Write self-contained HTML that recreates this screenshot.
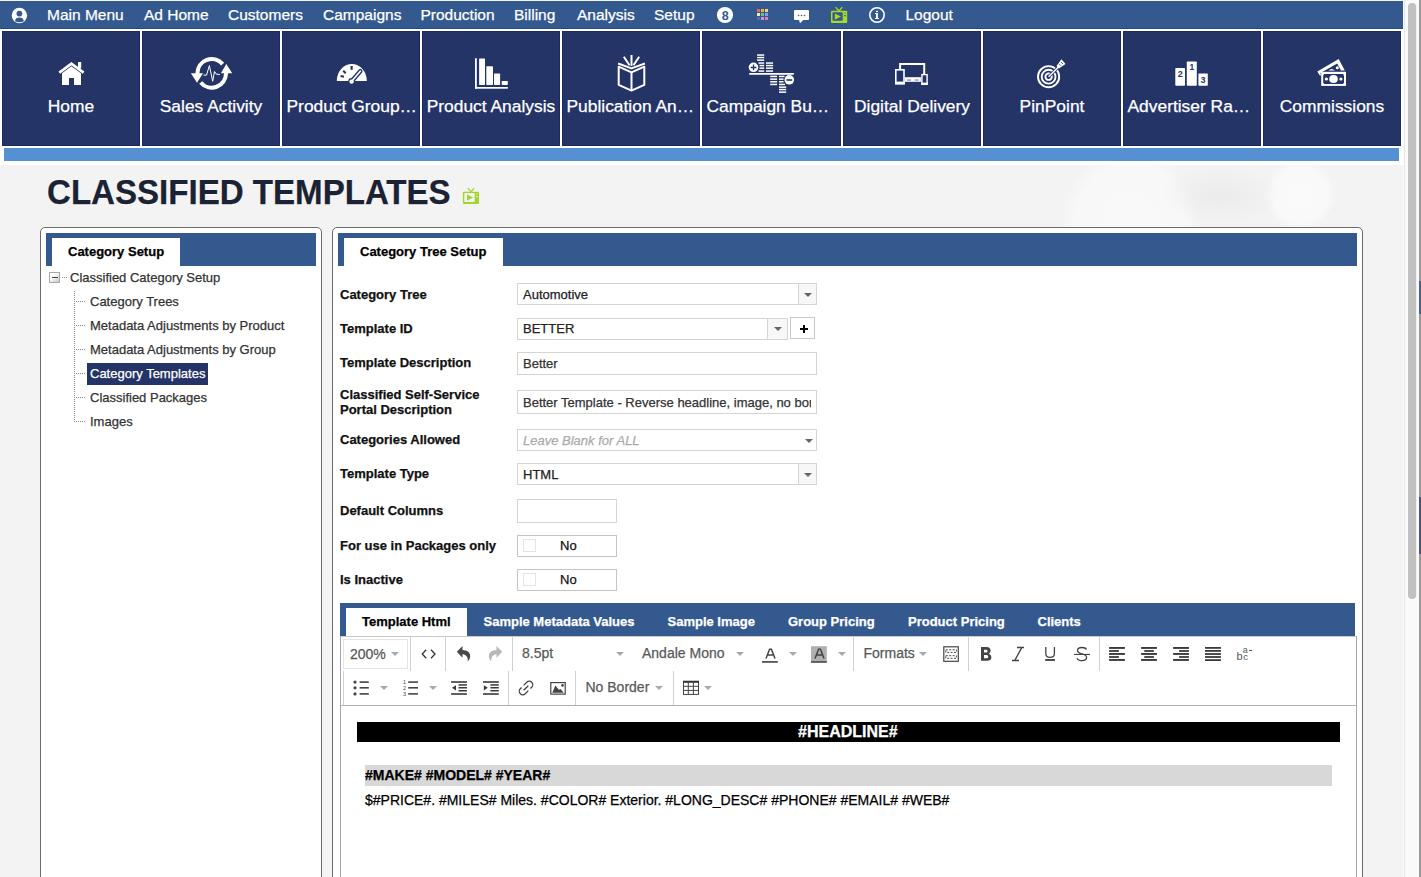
<!DOCTYPE html>
<html><head><meta charset="utf-8">
<style>
*{box-sizing:border-box;margin:0;padding:0}
html,body{width:1421px;height:877px;overflow:hidden;font-family:"Liberation Sans",sans-serif;}
body{background:#f3f3f3;position:relative;}
.a{position:absolute;}
.t,.lbl,.tree,.lab,.inp span{-webkit-text-stroke:0.25px currentColor;}
.t{position:absolute;white-space:nowrap;line-height:1;}
#topbar{left:0;top:1px;width:1403px;height:28px;background:#33598e;border-bottom:1px solid #274a7c;}
#topbar .t{color:#fff;font-size:15.5px;top:5.5px;}
.tile{position:absolute;top:31px;width:138px;height:115px;background:#243466;border:1px solid #1c2a58;}
.tile .lbl{position:absolute;left:0px;right:0px;top:64px;text-align:center;color:#fff;font-size:17.4px;line-height:20px;white-space:nowrap;}
.tile svg{position:absolute;left:0;top:0;}
#lbar{left:4px;top:148px;width:1395px;height:13px;background:#5591d2;}
#whiteband{left:0;top:29px;width:1403px;height:136px;background:#fff;}
.panel{position:absolute;top:227px;height:700px;background:#fff;border:1px solid #6b6b6b;border-radius:5px;}
.tabbar{position:absolute;height:33px;background:#33598e;}
.tab{position:absolute;background:#fff;height:28px;font-weight:bold;font-size:13px;color:#000;}
.lab{position:absolute;font-weight:bold;font-size:13px;color:#111;white-space:nowrap;line-height:15px;}
.inp{position:absolute;background:#fff;border:1px solid #d4d4d4;font-size:13px;color:#222;white-space:nowrap;overflow:hidden;}
.inp span{position:absolute;left:5px;top:4px;line-height:14px;}
.ddb{position:absolute;right:0;top:0;bottom:0;width:18px;border-left:1px solid #d4d4d4;background:#f7f7f7;}
.caret{position:absolute;width:0;height:0;border-left:4px solid transparent;border-right:4px solid transparent;border-top:4px solid #666;}
.tree{position:absolute;font-size:13px;color:#333;white-space:nowrap;line-height:15px;}
.tb .t{color:#595959;font-size:14px;}
.sep{position:absolute;width:1px;background:#d0d0d0;}
.gc{position:absolute;width:0;height:0;border-left:4px solid transparent;border-right:4px solid transparent;border-top:4px solid #a5aab0;}
</style></head><body>
<div class="a" style="left:1060px;top:150px;width:140px;height:140px;border-radius:50%;background:radial-gradient(circle,#f9f9f9 0%,#f8f8f8 55%,rgba(248,248,248,0) 70%);"></div>
<div class="a" style="left:1265px;top:160px;width:70px;height:70px;border-radius:50%;background:radial-gradient(circle,#fafafa 0%,#f9f9f9 55%,rgba(249,249,249,0) 72%);"></div>
<div class="a" style="left:1160px;top:165px;width:120px;height:60px;border-radius:50%;background:radial-gradient(ellipse,#ebebeb 0%,rgba(235,235,235,0) 70%);"></div>
<div class="a" id="whiteband"></div>
<div class="a" id="topbar">
  <span class="t" style="left:47px">Main Menu</span>
  <span class="t" style="left:144px">Ad Home</span>
  <span class="t" style="left:228px">Customers</span>
  <span class="t" style="left:323px">Campaigns</span>
  <span class="t" style="left:420.5px">Production</span>
  <span class="t" style="left:514px">Billing</span>
  <span class="t" style="left:577px">Analysis</span>
  <span class="t" style="left:654px">Setup</span>
  <span class="t" style="left:905.5px">Logout</span>
</div>
<div class="tile" style="left:2px;width:138px"><div class="lbl">Home</div></div>
<div class="tile" style="left:142px;width:138px"><div class="lbl">Sales Activity</div></div>
<div class="tile" style="left:282px;width:138px"><div class="lbl" style="text-align:left;left:3.5px;">Product Group…</div></div>
<div class="tile" style="left:422px;width:138px"><div class="lbl">Product Analysis</div></div>
<div class="tile" style="left:562px;width:138px"><div class="lbl" style="text-align:left;left:3.5px;">Publication An…</div></div>
<div class="tile" style="left:702px;width:139px"><div class="lbl" style="text-align:left;left:3.5px;">Campaign Bu…</div></div>
<div class="tile" style="left:843px;width:138px"><div class="lbl">Digital Delivery</div></div>
<div class="tile" style="left:983px;width:138px"><div class="lbl">PinPoint</div></div>
<div class="tile" style="left:1123px;width:138px"><div class="lbl" style="text-align:left;left:3.5px;">Advertiser Ra…</div></div>
<div class="tile" style="left:1263px;width:138px"><div class="lbl">Commissions</div></div>
<div class="a" id="lbar"></div>

<div class="t" style="left:47px;top:174px;font-size:35px;font-weight:bold;color:#1a2233;text-shadow:0 1px 1px #fff;transform-origin:0 0;transform:scaleX(0.945);">CLASSIFIED TEMPLATES</div>

<!-- left panel -->
<div class="panel" style="left:40px;width:282px;">
  <div class="tabbar" style="left:5px;top:5px;width:270px;"></div>
  <div class="tab" style="left:11px;top:10px;width:128px;"><span class="t" style="left:16px;top:7px">Category Setup</span></div>
</div>

<!-- right panel -->
<div class="panel" style="left:332px;width:1031px;">
  <div class="tabbar" style="left:5px;top:5px;width:1019px;"></div>
  <div class="tab" style="left:11px;top:10px;width:159px;"><span class="t" style="left:16px;top:7px">Category Tree Setup</span></div>
</div>


<!-- tree -->
<div class="a" style="left:49px;top:272px;width:11px;height:11px;border:1px solid #a8a8a8;background:linear-gradient(135deg,#fff,#fff 30%,#c8c8c8);"></div>
<div class="a" style="left:52px;top:277px;width:6px;height:1px;background:#444;"></div>
<div class="a" style="left:62px;top:277px;width:5px;height:1px;background:repeating-linear-gradient(90deg,#888 0 1px,transparent 1px 2px);"></div>
<div class="tree" style="left:70px;top:270px;">Classified Category Setup</div>
<div class="a" style="left:74px;top:291px;width:1px;height:131px;background:repeating-linear-gradient(#888 0 1px,transparent 1px 2px);"></div>
<div class="a" style="left:75px;top:301px;width:10px;height:1px;background:repeating-linear-gradient(90deg,transparent 0 1px,#888 1px 2px);"></div>
<div class="a" style="left:75px;top:325px;width:10px;height:1px;background:repeating-linear-gradient(90deg,transparent 0 1px,#888 1px 2px);"></div>
<div class="a" style="left:75px;top:349px;width:10px;height:1px;background:repeating-linear-gradient(90deg,transparent 0 1px,#888 1px 2px);"></div>
<div class="a" style="left:75px;top:373px;width:10px;height:1px;background:repeating-linear-gradient(90deg,transparent 0 1px,#888 1px 2px);"></div>
<div class="a" style="left:75px;top:397px;width:10px;height:1px;background:repeating-linear-gradient(90deg,transparent 0 1px,#888 1px 2px);"></div>
<div class="a" style="left:75px;top:421px;width:10px;height:1px;background:repeating-linear-gradient(90deg,transparent 0 1px,#888 1px 2px);"></div>
<div class="tree" style="left:90px;top:294px;">Category Trees</div>
<div class="tree" style="left:90px;top:318px;">Metadata Adjustments by Product</div>
<div class="tree" style="left:90px;top:342px;">Metadata Adjustments by Group</div>
<div class="a" style="left:87px;top:363px;width:121px;height:22px;background:#243466;"></div>
<div class="tree" style="left:90px;top:366px;color:#fff;">Category Templates</div>
<div class="tree" style="left:90px;top:390px;">Classified Packages</div>
<div class="tree" style="left:90px;top:414px;">Images</div>

<!-- form -->
<div class="lab" style="left:340px;top:287px;">Category Tree</div>
<div class="lab" style="left:340px;top:321px;">Template ID</div>
<div class="lab" style="left:340px;top:355px;">Template Description</div>
<div class="lab" style="left:340px;top:387px;">Classified Self-Service<br>Portal Description</div>
<div class="lab" style="left:340px;top:432px;">Categories Allowed</div>
<div class="lab" style="left:340px;top:466px;">Template Type</div>
<div class="lab" style="left:340px;top:503px;">Default Columns</div>
<div class="lab" style="left:340px;top:538px;">For use in Packages only</div>
<div class="lab" style="left:340px;top:572px;">Is Inactive</div>

<div class="inp" style="left:517px;top:283px;width:300px;height:22px;"><span>Automotive</span><div class="ddb"><div class="caret" style="left:5px;top:9px;"></div></div></div>
<div class="inp" style="left:517px;top:318px;width:271px;height:22px;"><span style="top:3px">BETTER</span><div class="ddb" style="width:20px;"><div class="caret" style="left:6px;top:8px;"></div></div></div>
<div class="inp" style="left:790px;top:317px;width:25px;height:22px;border-color:#c8c8c8;"><div class="a" style="left:9px;top:10px;width:8px;height:2px;background:#000;"></div><div class="a" style="left:12px;top:7px;width:2px;height:8px;background:#000;"></div></div>
<div class="inp" style="left:517px;top:352px;width:300px;height:23px;"><span style="color:#333">Better</span></div>
<div class="inp" style="left:517px;top:390px;width:300px;height:24px;"><span style="color:#333;top:5px;width:288px;overflow:hidden;">Better Template - Reverse headline, image, no bor</span></div>
<div class="inp" style="left:517px;top:429px;width:300px;height:22px;"><span style="color:#aaa;font-style:italic">Leave Blank for ALL</span><div class="caret" style="left:287px;top:9px;"></div></div>
<div class="inp" style="left:517px;top:463px;width:300px;height:22px;"><span>HTML</span><div class="ddb"><div class="caret" style="left:5px;top:9px;"></div></div></div>
<div class="inp" style="left:517px;top:499px;width:100px;height:24px;"></div>
<div class="inp" style="left:517px;top:535px;width:100px;height:22px;border-color:#c4c4c4;"><div class="a" style="left:5px;top:3px;width:13px;height:13px;border:1px solid #e4e4e4;"></div><span style="left:42px;top:2.5px;color:#111">No</span></div>
<div class="inp" style="left:517px;top:569px;width:100px;height:22px;border-color:#c4c4c4;"><div class="a" style="left:5px;top:3px;width:13px;height:13px;border:1px solid #e4e4e4;"></div><span style="left:42px;top:2.5px;color:#111">No</span></div>

<!-- editor -->
<div class="a" style="left:340px;top:603px;width:1015px;height:34px;background:#33598e;"></div>
<div class="a" style="left:346px;top:608px;width:121px;height:29px;background:#fff;"></div>
<div class="t" style="left:362px;top:615px;font-size:13px;font-weight:bold;color:#000;">Template Html</div>
<div class="t" style="left:483.5px;top:615px;font-size:13px;font-weight:bold;color:#fff;">Sample Metadata Values</div>
<div class="t" style="left:667.5px;top:615px;font-size:13px;font-weight:bold;color:#fff;">Sample Image</div>
<div class="t" style="left:788px;top:615px;font-size:13px;font-weight:bold;color:#fff;">Group Pricing</div>
<div class="t" style="left:908px;top:615px;font-size:13px;font-weight:bold;color:#fff;">Product Pricing</div>
<div class="t" style="left:1037.5px;top:615px;font-size:13px;font-weight:bold;color:#fff;">Clients</div>
<div class="a" style="left:340px;top:636px;width:1017px;height:260px;background:#fff;border:1px solid #a8a8a8;border-top:1px solid #c8c8c8;"></div>
<div class="a" style="left:341px;top:705px;width:1015px;height:1px;background:#b0b0b0;"></div>
<div class="a" style="left:343px;top:639px;width:65px;height:30px;border:1px solid #e2e4e7;"></div>
<div class="sep" style="left:410px;top:637px;height:34px;"></div>
<div class="sep" style="left:445px;top:637px;height:34px;"></div>
<div class="sep" style="left:512px;top:637px;height:34px;"></div>
<div class="sep" style="left:853px;top:637px;height:34px;"></div>
<div class="sep" style="left:968px;top:637px;height:34px;"></div>
<div class="sep" style="left:1099px;top:637px;height:34px;"></div>
<div class="sep" style="left:343px;top:671px;height:34px;"></div>
<div class="sep" style="left:508px;top:671px;height:34px;"></div>
<div class="sep" style="left:575px;top:671px;height:34px;"></div>
<div class="sep" style="left:673px;top:671px;height:34px;"></div>
<div class="tb">
<div class="t" style="left:350px;top:647px;">200%</div>
<div class="t" style="left:522px;top:646px;">8.5pt</div>
<div class="t" style="left:642px;top:646px;">Andale Mono</div>
<div class="t" style="left:863.5px;top:646px;">Formats</div>
<div class="t" style="left:585.5px;top:680px;">No Border</div>
</div>
<div class="gc" style="left:391px;top:652px;"></div>
<div class="gc" style="left:616px;top:652px;"></div>
<div class="gc" style="left:736px;top:652px;"></div>
<div class="gc" style="left:789px;top:652px;"></div>
<div class="gc" style="left:838px;top:652px;"></div>
<div class="gc" style="left:919px;top:652px;"></div>
<div class="gc" style="left:380px;top:686px;"></div>
<div class="gc" style="left:429px;top:686px;"></div>
<div class="gc" style="left:654.5px;top:686px;"></div>
<div class="gc" style="left:703.5px;top:686px;"></div>

<div class="t" style="left:357px;top:722px;width:983px;height:20px;background:#000;"></div>
<div class="t" style="left:798px;top:724px;font-size:16px;font-weight:bold;color:#fff;">#HEADLINE#</div>
<div class="a" style="left:365px;top:765px;width:967px;height:21px;background:#d8d8d8;"></div>
<div class="t" style="left:365px;top:768px;font-size:14px;font-weight:bold;color:#000;">#MAKE# #MODEL# #YEAR#</div>
<div class="t" style="left:365px;top:793px;font-size:14px;color:#000;">$#PRICE#. #MILES# Miles. #COLOR# Exterior. #LONG_DESC# #PHONE# #EMAIL# #WEB#</div>

<svg class="a" style="left:0;top:0;" width="1421" height="877" viewBox="0 0 1421 877">
<!-- top bar icons -->
<g id="topicons">
  <circle cx="19.4" cy="15.5" r="7.7" fill="#fff"/>
  <circle cx="19.4" cy="13.6" r="2.9" fill="#33598e"/>
  <path d="M15 21.3 Q15 17.4 19.4 17.4 Q23.8 17.4 23.8 21.3 Q21.8 22.2 19.4 22.2 Q17 22.2 15 21.3Z" fill="#33598e"/>
  <circle cx="725" cy="15" r="8.1" fill="#fff"/>
  <text x="725.2" y="19.6" font-family="Liberation Sans" font-weight="bold" font-size="12.5" fill="#33598e" text-anchor="middle">8</text>
  <g>
   <rect x="757" y="9" width="3" height="3" fill="#e8645a"/><rect x="761" y="9" width="3" height="3" fill="#f0a860"/><rect x="765" y="9" width="3" height="3" fill="#f0d868"/>
   <rect x="757" y="13" width="3" height="3" fill="#e6f0a8"/><rect x="761" y="13" width="3" height="3" fill="#70c070"/><rect x="765" y="13" width="3" height="3" fill="#70a8f0"/>
   <rect x="757" y="17" width="3" height="3" fill="#5a6aa0"/><rect x="761" y="17" width="3" height="3" fill="#c890e0"/><rect x="765" y="17" width="3" height="3" fill="#e87aa8"/>
  </g>
  <path d="M795 10 H808 Q809 10 809 11 V19 Q809 20 808 20 H803.3 L800 23.2 L799 20 H795 Q794 20 794 19 V11 Q794 10 795 10Z" fill="#fff"/>
  <circle cx="798.5" cy="15.5" r="0.8" fill="#33598e"/><circle cx="801.5" cy="15.5" r="0.8" fill="#33598e"/><circle cx="804.5" cy="15.5" r="0.8" fill="#33598e"/>
  <g fill="#a8d82a">
   <rect x="831" y="10.8" width="16.2" height="12.2" rx="0.8"/>
   <path d="M836 7.6 L839 11 L841.9 7.6" stroke="#a8d82a" stroke-width="1.4" fill="none" stroke-linecap="round"/>
  </g>
  <rect x="832.5" y="12.2" width="10.2" height="8.6" rx="1" fill="#33598e"/>
  <path d="M834.8 13.6 L841 16.6 L834.8 19.8Z" fill="#a8d82a"/>
  <rect x="844.2" y="12.4" width="1.5" height="1.5" fill="#7aa040"/><rect x="844" y="15.2" width="2" height="1" fill="#33598e"/>
  <circle cx="877" cy="15" r="7.2" fill="none" stroke="#fff" stroke-width="1.6"/>
  <rect x="876" y="10.8" width="2" height="1.3" fill="#fff"/>
  <path d="M875 13 H877.9 V18.1 H878.9 V19.1 H874.9 V18.1 H876 V14 H875Z" fill="#fff"/>
</g>

<g id="tileicons" fill="#fff" stroke="none">
  <!-- home -->
  <path d="M59.3 72.6 L71.4 63.6 L83.6 72.6" fill="none" stroke="#fff" stroke-width="2.6"/>
  <rect x="78" y="62" width="3.2" height="6.5"/>
  <path d="M62 73.3 L71.4 66.3 L81 73.3 V85 H74 V78 H69 V85 H62Z"/>
  <!-- sales activity -->
  <path d="M197.4 74 V73.3 A14.3 14.3 0 0 1 222.65 64.1" fill="none" stroke="#fff" stroke-width="4.1"/>
  <path d="M226 72.6 V73.3 A14.3 14.3 0 0 1 200.75 82.5" fill="none" stroke="#fff" stroke-width="4.1"/>
  <path d="M190.9 73.3 L203 73.3 L197 82.8Z"/>
  <path d="M220.9 73.3 L232.2 73.3 L226.3 64.1Z"/>
  <path d="M203.5 75.1 L206.5 75.1 L209.4 65.6 L212.7 81.3 L214.5 71.5 L216.3 74.1 L219.9 74.6" fill="none" stroke="#fff" stroke-width="1" stroke-linejoin="round"/>
  <!-- gauge -->
  <path d="M336.8 81 A15 17 0 0 1 366.8 81Z"/>
  <g fill="#243466">
   <rect x="350.5" y="66" width="2.2" height="3.8"/>
   <rect x="343.5" y="70.2" width="2" height="3.5" transform="rotate(-45 344.5 72)"/>
   <rect x="340.5" y="75.4" width="3.5" height="2" transform="rotate(15 342.3 76.4)"/>
  </g>
  <path d="M351.7 81.3 L360.3 71.2" stroke="#243466" stroke-width="4.4" stroke-linecap="round"/>
  <circle cx="351.6" cy="81.4" r="3.4" fill="#243466"/>
  <path d="M351.7 81.3 L360.3 71.2" stroke="#fff" stroke-width="1.7" stroke-linecap="round"/>
  <circle cx="351.6" cy="81.6" r="2.2"/>
  <!-- product analysis -->
  <rect x="475" y="58.2" width="1.8" height="30.5"/>
  <rect x="475" y="87" width="32.8" height="1.7"/>
  <rect x="479.1" y="58.5" width="5.9" height="26.4" rx="0.6"/>
  <rect x="486.3" y="66.2" width="6.7" height="18.7" rx="0.6"/>
  <rect x="494" y="73.6" width="6.1" height="11.3" rx="0.6"/>
  <rect x="501.7" y="81" width="6.1" height="3.9" rx="0.6"/>
  <!-- publication -->
  <g fill="none" stroke="#fff" stroke-width="2" stroke-linejoin="round">
   <path d="M618.7 66.7 L631.5 72.4 L644.3 66.7 V84.9 L631.5 90.6 L618.7 84.9Z"/>
   <path d="M631.5 72.4 V90.6"/>
   <path d="M618.1 63.5 L631.5 68.4 L644.9 63.5"/>
   <path d="M631.5 55 V66"/>
   <path d="M623.8 56.7 L629.5 65.2"/>
   <path d="M639.2 56.7 L633.5 65.2"/>
  </g>
  <!-- campaign budget -->
  <rect x="749" y="73" width="45" height="1.8" rx="0.8"/>
  <circle cx="753.5" cy="67.3" r="4.8"/>
  <path d="M753.5 64.5 V70.3 M750.6 67.5 H756.4" stroke="#243466" stroke-width="1.3"/>
  <g>
   <rect x="757.1" y="54.3" width="7.1" height="1.5"/><rect x="757.1" y="56.8" width="7.1" height="1.5"/><rect x="757.1" y="59.4" width="7.1" height="1.5"/>
   <rect x="758.5" y="62.3" width="5.7" height="1.5"/><rect x="759.5" y="64.8" width="4.7" height="1.5"/><rect x="759.5" y="67.4" width="4.7" height="1.5"/><rect x="758.5" y="70.3" width="5.7" height="1.5"/>
   <rect x="766" y="62.3" width="7.1" height="1.5"/><rect x="766" y="64.8" width="7.1" height="1.5"/><rect x="766" y="67.4" width="7.1" height="1.5"/><rect x="766" y="70.3" width="7.1" height="1.5"/>
   <rect x="770.2" y="75.7" width="6.9" height="1.5"/><rect x="770.2" y="78.4" width="6.9" height="1.5"/><rect x="770.2" y="81" width="6.9" height="1.5"/><rect x="770.2" y="83.7" width="6.9" height="1.5"/>
   <rect x="779" y="75.7" width="5.5" height="1.5"/><rect x="779" y="78.4" width="4.5" height="1.5"/><rect x="779" y="81" width="4.5" height="1.5"/><rect x="779" y="83.7" width="6" height="1.5"/>
   <rect x="779" y="86.4" width="7.2" height="1.5"/><rect x="779" y="88.8" width="7.2" height="1.5"/><rect x="779" y="91.4" width="7.2" height="1.5"/>
  </g>
  <circle cx="789.3" cy="79.8" r="4.8"/>
  <path d="M786.4 80 H792.2" stroke="#243466" stroke-width="1.6"/>
  <!-- digital delivery -->
  <path d="M900.1 69.5 V64.1 H924.2 V74" fill="none" stroke="#fff" stroke-width="2"/>
  <rect x="904.8" y="77.2" width="16.1" height="4.6" fill="#fff"/>
  <rect x="907" y="79.4" width="4" height="1.3" fill="#8a94b4"/><rect x="914.7" y="79.4" width="4" height="1.3" fill="#8a94b4"/>
  <rect x="895.8" y="69.8" width="8.2" height="13.8" fill="none" stroke="#fff" stroke-width="1.6"/>
  <rect x="895" y="81.6" width="9.8" height="2.8"/>
  <rect x="921.9" y="74.6" width="5.2" height="9.6" fill="none" stroke="#fff" stroke-width="1.4"/>
  <rect x="921.2" y="82.6" width="6.6" height="2.3"/>
  <!-- pinpoint -->
  <g fill="none" stroke="#fff" stroke-width="1.9">
   <circle cx="1048.6" cy="76.7" r="10.6"/>
   <circle cx="1048.6" cy="76.7" r="6.9"/>
   <circle cx="1048.6" cy="76.7" r="3.2"/>
  </g>
  <path d="M1048.6 76.7 L1059 66.5" stroke="#243466" stroke-width="3"/>
  <path d="M1048.6 76.7 L1061 64.5" stroke="#fff" stroke-width="1.5"/>
  <path d="M1056.5 66 L1061.5 59.3 L1065.5 63.9 L1058.8 68.6Z"/>
  <path d="M1059 63.8 L1061 65.8 M1061 62 L1063 64" stroke="#243466" stroke-width="0.8"/>
  <!-- podium -->
  <rect x="1175.3" y="68" width="9.7" height="17.7" rx="0.7"/>
  <rect x="1186.8" y="61.5" width="10" height="24.2" rx="0.7"/>
  <rect x="1198.4" y="73.6" width="9.4" height="12.1" rx="0.7"/>
  <text x="1180.2" y="76.6" font-family="Liberation Sans" font-weight="bold" font-size="9" fill="#243466" text-anchor="middle">2</text>
  <text x="1191.8" y="70.2" font-family="Liberation Sans" font-weight="bold" font-size="8.5" fill="#243466" text-anchor="middle">1</text>
  <text x="1203.1" y="82.6" font-family="Liberation Sans" font-weight="bold" font-size="9" fill="#243466" text-anchor="middle">3</text>
  <!-- commissions -->
  <path d="M1317.3 71.5 L1338.7 59 L1344.8 70.6 L1341 70.6 L1337.2 63.5 L1320.5 73 L1321 75.5 L1319.8 75.6Z"/>
  <path d="M1328.5 70.5 Q1331.5 67.5 1335 70.5Z"/>
  <circle cx="1337.3" cy="67.8" r="1.5"/>
  <rect x="1321.2" y="71.8" width="24.8" height="14.1"/>
  <path d="M1324.2 73.9 H1343 L1344 75.5 V82.5 L1343 84.1 H1324.2 L1323.2 82.5 V75.5Z" fill="#243466"/>
  <ellipse cx="1333.5" cy="79" rx="4.3" ry="3.9"/>
  <circle cx="1326.4" cy="79" r="1.6"/><circle cx="1340.9" cy="79" r="1.6"/>
</g>


<g id="titletv">
  <rect x="462.9" y="191.8" width="16.1" height="12.1" rx="0.8" fill="#a3d528"/>
  <path d="M468.3 188.6 L471 191.8 L473.7 188.6" fill="none" stroke="#a3d528" stroke-width="1.3" stroke-linecap="round"/>
  <rect x="464.3" y="193.1" width="10.4" height="8.8" rx="1" fill="#f2f2f8"/>
  <path d="M467 194.5 L473.1 197.6 L467 200.7Z" fill="#a3d528"/>
  <rect x="476" y="193.3" width="1.6" height="1.6" fill="#c8e880"/><rect x="476" y="196.2" width="1.8" height="0.9" fill="#f2f2f8"/>
</g>
<!-- scrollbar -->
<rect x="1403" y="0" width="18" height="877" fill="#fafafa"/>
<rect x="1404" y="0" width="1" height="877" fill="#e6e6e6"/>
<rect x="1408" y="3" width="8.2" height="596" rx="4.1" fill="#c1c1c1"/>
<rect x="1419" y="0" width="2" height="877" fill="#9a9a9a"/><rect x="1419" y="281" width="2" height="33" fill="#4a6188"/><rect x="1419" y="497" width="2" height="57" fill="#4a5478"/>
<g id="tbicons" fill="#444" stroke="none">
  <path d="M426.2 649.8 L422.2 654 L426.2 658.2 M431 649.8 L435 654 L431 658.2" fill="none" stroke="#333" stroke-width="1.3"/>
  <path d="M456.8 651.8 L462.5 646.1 V649.9 Q470.2 649.9 470.2 656.5 Q470.2 659.2 467.7 661.5 Q468.6 655.2 462.5 653.9 V657.7Z" fill="#4a4a4a"/>
  <path d="M502.2 651.8 L496.5 646.1 V649.9 Q488.8 649.9 488.8 656.5 Q488.8 659.2 491.3 661.5 Q490.4 655.2 496.5 653.9 V657.7Z" fill="#b8b8b8"/>
  <path d="M766 658.6 L769.6 649.2 H771.4 L775 658.6 M767.4 655 H773.6" fill="none" stroke="#444" stroke-width="1.5"/>
  <rect x="762" y="661" width="15.8" height="1.8" fill="#555"/>
  <rect x="811" y="646.2" width="15.8" height="16.6" fill="#b0b0b0"/>
  <rect x="811" y="661" width="15.8" height="1.8" fill="#5a5a5a"/>
  <path d="M815 658.6 L818.6 649.2 H820.4 L824 658.6 M816.4 655 H822.6" fill="none" stroke="#444" stroke-width="1.5"/>
  <rect x="943.8" y="646.8" width="14.5" height="14.5" fill="none" stroke="#444" stroke-width="1.2"/>
  <rect x="945.8" y="649.8" width="10.6" height="2.6" fill="none" stroke="#444" stroke-width="1" stroke-dasharray="2 1.4"/>
  <rect x="945.8" y="655.7" width="10.6" height="2.6" fill="none" stroke="#444" stroke-width="1" stroke-dasharray="2 1.4"/>
  <path fill-rule="evenodd" fill="#444" d="M981 647.1 H986.5 Q990.6 647.1 990.6 650.6 Q990.6 652.9 988.7 653.7 Q991.4 654.6 991.4 657.3 Q991.4 660.8 987 660.8 H981 Z M984 649.7 V652.6 H986.1 Q987.6 652.6 987.6 651.15 Q987.6 649.7 986.1 649.7 Z M984 655.1 V658.2 H986.6 Q988.3 658.2 988.3 656.65 Q988.3 655.1 986.6 655.1 Z"/>
  <path d="M1017 647.5 H1024 M1012 660.5 H1019 M1021.8 647.6 L1014.8 660.4" fill="none" stroke="#444" stroke-width="1.3"/>
  <path d="M1045.8 647 V653.5 Q1045.8 657.4 1050.1 657.4 Q1054.4 657.4 1054.4 653.5 V647" fill="none" stroke="#444" stroke-width="1.3"/>
  <rect x="1045.2" y="659" width="9.8" height="1.9"/>
  <path d="M1086.5 649.5 Q1085.5 647.5 1082 647.5 Q1077.5 647.5 1077.5 650.5 Q1077.5 652.8 1082 653.8 Q1086.6 654.8 1086.6 657.6 Q1086.6 660.6 1082 660.6 Q1078 660.6 1077 658.2" fill="none" stroke="#444" stroke-width="1.3"/>
  <rect x="1074" y="653.9" width="16" height="1.1"/>
  <g fill="#3a3a3a">
   <rect x="1109.1" y="647" width="15.8" height="1.9"/><rect x="1109.1" y="650.1" width="9.8" height="1.8"/><rect x="1109.1" y="653" width="15.8" height="1.9"/><rect x="1109.1" y="656.1" width="9.8" height="1.8"/><rect x="1109.1" y="659" width="15.8" height="1.9"/>
   <rect x="1141.1" y="647" width="15.8" height="1.9"/><rect x="1144.3" y="650.1" width="9.6" height="1.8"/><rect x="1141.1" y="653" width="15.8" height="1.9"/><rect x="1144.3" y="656.1" width="9.6" height="1.8"/><rect x="1141.1" y="659" width="15.8" height="1.9"/>
   <rect x="1173.1" y="647" width="15.8" height="1.9"/><rect x="1179.1" y="650.1" width="9.8" height="1.8"/><rect x="1173.1" y="653" width="15.8" height="1.9"/><rect x="1179.1" y="656.1" width="9.8" height="1.8"/><rect x="1173.1" y="659" width="15.8" height="1.9"/>
   <rect x="1205" y="647" width="15.9" height="1.8"/><rect x="1205" y="650" width="15.9" height="1.8"/><rect x="1205" y="653.1" width="15.9" height="1.8"/><rect x="1205" y="656.1" width="15.9" height="1.8"/><rect x="1205" y="659.2" width="15.9" height="1.8"/>
  </g>
  <text x="1236.5" y="660" font-family="Liberation Sans" font-size="11" fill="#555">b</text>
  <text x="1243.2" y="660" font-family="Liberation Sans" font-size="9.5" fill="#555">c</text>
  <text x="1242.8" y="653" font-family="Liberation Sans" font-size="9" fill="#555">a</text>
  <rect x="1249" y="650" width="3.1" height="1" fill="#555"/>
  <!-- row 2 -->
  <g fill="#444">
   <circle cx="355" cy="682.1" r="1.6"/><circle cx="355" cy="687.8" r="1.6"/><circle cx="355" cy="693.9" r="1.6"/>
   <rect x="359.6" y="681.3" width="9.2" height="1.6"/><rect x="359.6" y="687" width="9.2" height="1.6"/><rect x="359.6" y="693.1" width="9.2" height="1.6"/>
   <rect x="408.2" y="681.3" width="9.8" height="1.6"/><rect x="408.2" y="687" width="9.8" height="1.6"/><rect x="408.2" y="693.1" width="9.8" height="1.6"/>
  </g>
  <text x="403" y="684" font-family="Liberation Sans" font-size="5.5" fill="#444">1</text>
  <text x="403" y="690" font-family="Liberation Sans" font-size="5.5" fill="#444">2</text>
  <text x="403" y="696" font-family="Liberation Sans" font-size="5.5" fill="#444">3</text>
  <g fill="#3a3a3a">
   <rect x="451.1" y="681.2" width="15.8" height="1.6"/><rect x="458.5" y="684.2" width="8.4" height="1.5"/><rect x="458.5" y="687" width="8.4" height="1.5"/><rect x="458.5" y="690" width="8.4" height="1.5"/><rect x="451.1" y="693.2" width="15.8" height="1.6"/>
   <path d="M452 687.8 L456 685.2 V690.4Z"/>
   <rect x="483" y="681.2" width="15.8" height="1.6"/><rect x="490.4" y="684.2" width="8.4" height="1.5"/><rect x="490.4" y="687" width="8.4" height="1.5"/><rect x="490.4" y="690" width="8.4" height="1.5"/><rect x="483" y="693.2" width="15.8" height="1.6"/>
   <path d="M487.8 687.8 L483.8 685.2 V690.4Z"/>
  </g>
  <g fill="none" stroke="#444" stroke-width="1.3">
   <g transform="translate(526 688) scale(1.17) rotate(-45) translate(-526 -688)" stroke-width="1.1">
   <path d="M526.2 685 H529.9 A3 3 0 0 1 529.9 691 H528.4"/>
   <path d="M525.8 691 H522.1 A3 3 0 0 1 522.1 685 H523.6"/>
   <path d="M523.2 688 H528.8"/>
   </g>
  </g>
  <rect x="550.8" y="682.6" width="14.4" height="11.5" fill="none" stroke="#444" stroke-width="1.2"/>
  <path d="M552.3 692.8 L555.3 685.4 L558.9 689.8 L560.6 689 L563.7 692.8Z" fill="#444"/>
  <circle cx="562.5" cy="685.4" r="1.3" fill="#444"/>
  <rect x="683.5" y="681.2" width="15" height="13.2" fill="none" stroke="#444" stroke-width="1"/>
  <rect x="683" y="681" width="15.8" height="1.8" fill="#333"/>
  <path d="M683.5 686.3 H698.5 M683.5 690.4 H698.5 M688.3 681.5 V694.5 M693.4 681.5 V694.5" fill="none" stroke="#444" stroke-width="1"/>
</g>
</svg>
</body></html>
